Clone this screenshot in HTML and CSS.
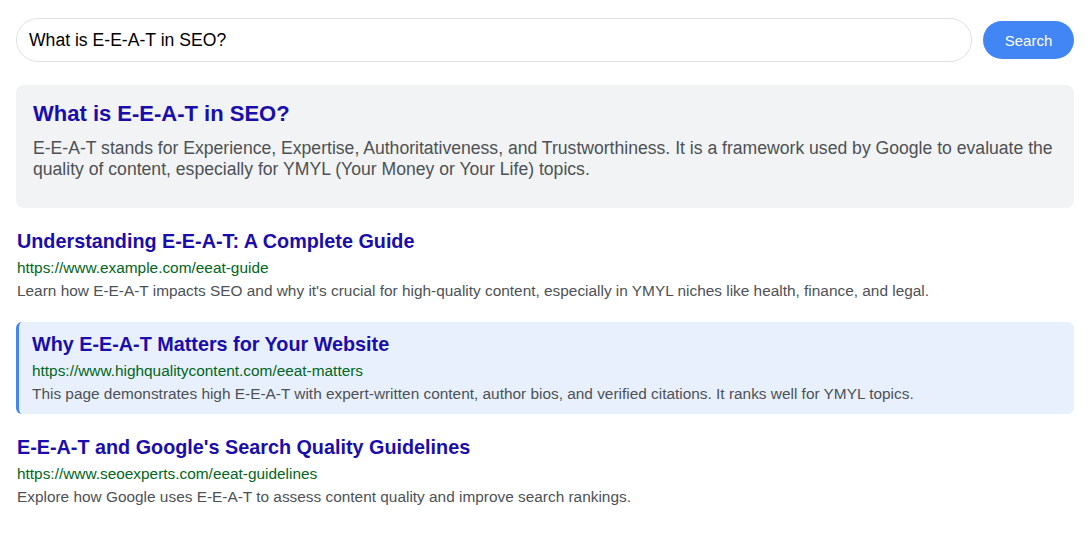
FILE: index.html
```html
<!DOCTYPE html>
<html lang="en">
<head>
    <meta charset="UTF-8">
    <meta name="viewport" content="width=device-width, initial-scale=1.0">
    <title>E-E-A-T Search</title>
    <link rel="stylesheet" href="styles.css">
</head>
<body>
    <div class="page">
        <div class="search-bar">
            <input type="text" class="search-input" value="What is E-E-A-T in SEO?">
            <button class="search-button">Search</button>
        </div>

        <div class="featured">
            <h2>What is E-E-A-T in SEO?</h2>
            <p>E-E-A-T stands for Experience, Expertise, Authoritativeness, and Trustworthiness. It is a framework used by Google to evaluate the quality of content, especially for YMYL (Your Money or Your Life) topics.</p>
        </div>

        <div class="result">
            <a class="result-title" href="#">Understanding E-E-A-T: A Complete Guide</a>
            <div class="result-url">https://www.example.com/eeat-guide</div>
            <div class="result-desc">Learn how E-E-A-T impacts SEO and why it's crucial for high-quality content, especially in YMYL niches like health, finance, and legal.</div>
        </div>

        <div class="result highlight">
            <a class="result-title" href="#">Why E-E-A-T Matters for Your Website</a>
            <div class="result-url">https://www.highqualitycontent.com/eeat-matters</div>
            <div class="result-desc">This page demonstrates high E-E-A-T with expert-written content, author bios, and verified citations. It ranks well for YMYL topics.</div>
        </div>

        <div class="result">
            <a class="result-title" href="#">E-E-A-T and Google's Search Quality Guidelines</a>
            <div class="result-url">https://www.seoexperts.com/eeat-guidelines</div>
            <div class="result-desc">Explore how Google uses E-E-A-T to assess content quality and improve search rankings.</div>
        </div>
    </div>
</body>
</html>
```

FILE: styles.css
```css
body {
    margin: 0;
    font-family: Arial, "Liberation Sans", sans-serif;
    background: #fff;
}
.page {
    padding: 18px 17px 16px 16px;
}
.search-bar {
    display: flex;
    align-items: center;
    gap: 11px;
    margin-bottom: 23px;
}
.search-input {
    flex: 1;
    height: 44px;
    box-sizing: border-box;
    padding: 0 12px;
    border: 1px solid #dfe1e5;
    border-radius: 22px;
    font-family: inherit;
    font-size: 17.6px;
    color: #000;
    outline: none;
}
.search-button {
    width: 91px;
    height: 38px;
    border: none;
    border-radius: 19px;
    background-color: #4285f4;
    color: white;
    font-family: inherit;
    font-size: 15px;
    cursor: pointer;
}
.featured {
    background-color: #f1f3f4;
    border-radius: 8px;
    padding: 16px 16px 28px 17px;
    margin-bottom: 11px;
}
.featured h2 {
    margin: 0 0 12px;
    font-size: 22px;
    line-height: 25px;
    color: #1a0dab;
}
.featured p {
    margin: 0;
    font-size: 17.6px;
    line-height: 21px;
    color: #4d5156;
}
.result {
    padding: 11px 0 12px 1px;
    margin-bottom: 11px;
}
.result-title {
    display: block;
    font-size: 19.8px;
    line-height: 23px;
    font-weight: bold;
    color: #1a0dab;
    text-decoration: none;
    margin-bottom: 7px;
}
.result-url {
    font-size: 15.4px;
    line-height: 16px;
    color: #006621;
    margin-bottom: 7px;
}
.result-desc {
    font-size: 15.4px;
    line-height: 16px;
    color: #4d5156;
}
.highlight {
    background-color: #e8f0fe;
    border-left: 3px solid #4285f4;
    border-radius: 6px;
    padding-left: 13px;
}
```
